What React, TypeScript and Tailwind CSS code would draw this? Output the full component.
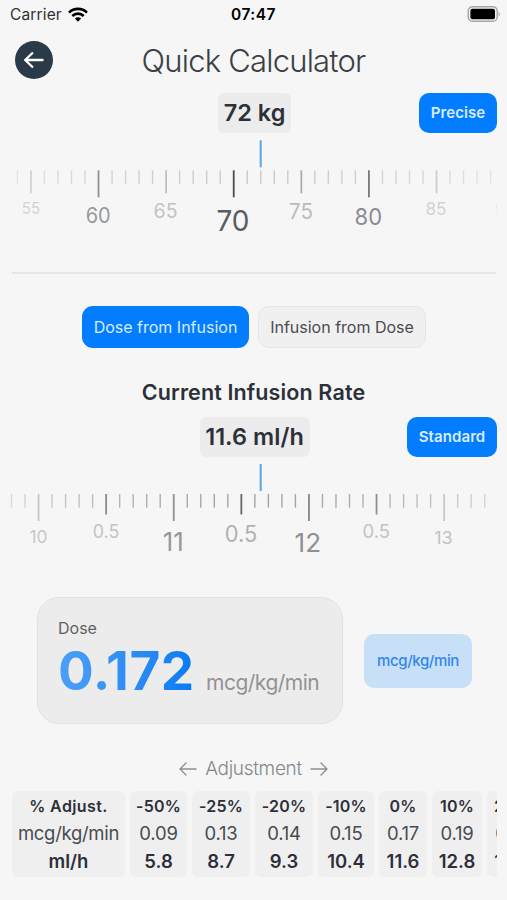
import React from "react";

type Label = { x: number; y: number; text: string; size: number; color: string; width: number };

const weightLabels: Label[] = [
  { x: 31, y: 214.3, text: "55", size: 16, color: "#d2d3d5", width: 18.5 },
  { x: 98.2, y: 223, text: "60", size: 21, color: "#98999c", width: 25 },
  { x: 165.6, y: 218, text: "65", size: 19.5, color: "#c2c3c5", width: 24 },
  { x: 233, y: 230.5, text: "70", size: 29, color: "#595c60", width: 33 },
  { x: 301, y: 219, text: "75", size: 21, color: "#bbbcbf", width: 24 },
  { x: 368.3, y: 224.5, text: "80", size: 23.5, color: "#8b8c90", width: 27.5 },
  { x: 436, y: 215, text: "85", size: 17.5, color: "#d2d3d5", width: 21 },
  { x: 505.2, y: 216, text: "90", size: 17.5, color: "#c8c9cb", width: 19 },
];

const rateLabels: Label[] = [
  { x: 38.5, y: 543, text: "10", size: 17, color: "#c6c7c9", width: 18 },
  { x: 106, y: 537.6, text: "0.5", size: 18, color: "#c2c3c5", width: 26.5 },
  { x: 173.3, y: 550.5, text: "11", size: 25.5, color: "#98999c", width: 21 },
  { x: 241, y: 541.5, text: "0.5", size: 22.5, color: "#b0b1b4", width: 32.5 },
  { x: 307.8, y: 551.5, text: "12", size: 26, color: "#8f9093", width: 26.5 },
  { x: 376.2, y: 538, text: "0.5", size: 19, color: "#c2c3c5", width: 27.5 },
  { x: 443.5, y: 543.5, text: "13", size: 17.5, color: "#c2c3c5", width: 18.5 },
];

const weightMajors: Record<number, [number, string, number]> = {
  1: [23, "#cfd0d1", 1.7],
  6: [27, "#8f9092", 1.8],
  11: [23, "#bcbdbf", 1.7],
  16: [27, "#4b4d51", 1.8],
  21: [23, "#a9aaad", 1.7],
  26: [27, "#77787b", 1.8],
  31: [23, "#cbccce", 1.7],
};
const rateMajors: Record<number, [number, string, number]> = {
  2: [27, "#c2c3c5", 1.6],
  7: [20.5, "#8a8b8e", 1.8],
  12: [27, "#8f9092", 1.8],
  17: [20.5, "#65676b", 1.8],
  22: [27, "#85868a", 1.8],
  27: [20.5, "#8f9092", 1.8],
  32: [27, "#c2c3c5", 1.6],
};

type RulerProps = {
  top: number;
  height: number;
  start: number;
  tickY: number;
  near: number;
  far: number;
  majors: Record<number, [number, string, number]>;
  labels: Label[];
};

function Ruler({ top, height, start, tickY, near, far, majors, labels }: RulerProps) {
  const ticks = Array.from({ length: 36 }, (_, i) => i);
  return (
    <svg
      className="ml-[10px] block w-[487px] shrink-0"
      height={height}
      viewBox={`10 ${top} 487 ${height}`}
      fontFamily="Inter, sans-serif"
    >
      <rect x={259.7} y={tickY - 30} width={2} height={27} fill="#5aa5e4" />
      {ticks.map((i) => {
        const x = start + i * 13.52;
        const major = majors[i];
        const shade = Math.round(near + (Math.abs(x - 254) / 242) ** 2 * (far - near));
        const [h, fill, w] = major ?? [13.7, `rgb(${shade},${shade},${shade + 1})`, 1.4];
        return <rect key={i} x={x - w / 2} y={tickY} width={w} height={h} fill={fill} />;
      })}
      {labels.map((l, i) => (
        <text key={i} x={l.x} y={l.y} fontSize={l.size} fill={l.color} textAnchor="middle" textLength={l.width} lengthAdjust="spacingAndGlyphs">
          {l.text}
        </text>
      ))}
    </svg>
  );
}

const columns = [
  { w: "w-[57px]", pct: "-50%", dose: "0.09", rate: "5.8" },
  { w: "w-[58px]", pct: "-25%", dose: "0.13", rate: "8.7" },
  { w: "w-[58px]", pct: "-20%", dose: "0.14", rate: "9.3" },
  { w: "w-[56px]", pct: "-10%", dose: "0.15", rate: "10.4" },
  { w: "w-[48px]", pct: "0%", dose: "0.17", rate: "11.6" },
  { w: "w-[50px]", pct: "10%", dose: "0.19", rate: "12.8" },
  { w: "w-[51px]", pct: "20%", dose: "0.21", rate: "13.9" },
];

function Arrow({ flip }: { flip?: boolean }) {
  return (
    <svg
      className={flip ? "rotate-180" : ""}
      width="18"
      height="14"
      viewBox="0 0 18 14"
      fill="none"
      stroke="#8d8e91"
      strokeWidth="1.4"
      strokeLinecap="round"
      strokeLinejoin="round"
    >
      <path d="M7 1 1 7l6 6M1 7h16" />
    </svg>
  );
}

export default function App() {
  return (
    <div className="flex h-[900px] w-[507px] flex-col overflow-hidden bg-[#f6f6f7] font-['Inter',sans-serif] whitespace-nowrap text-[#2c3038]">
      <div className="grid h-[30px] shrink-0 grid-cols-3 items-center px-[10px] text-black">
        <div className="flex items-center gap-[6px]">
          <span className="text-[15.5px] tracking-[0.15px] text-[#303032]">Carrier</span>
          <svg className="-mt-[2px]" width="20" height="15" viewBox="0 0 20 15" fill="none" stroke="#000" strokeWidth="2.6">
            <path d="M1 5.6a12.8 12.8 0 0 1 18 0" />
            <path d="M4.3 9a8.1 8.1 0 0 1 11.4 0" />
            <path d="M10 14.7 6.9 11.6a4.4 4.4 0 0 1 6.2 0Z" fill="#000" stroke="none" />
          </svg>
        </div>
        <span className="text-center text-[15.5px] font-semibold tracking-[0.5px]">07:47</span>
        <svg className="-mt-[3px] -mr-[4px] justify-self-end" width="34" height="16" viewBox="0 0 34 16">
          <rect x="1.2" y=".7" width="29" height="14.6" rx="4.2" fill="none" stroke="#a5a5a5" strokeWidth="1.4" />
          <rect x="3.4" y="2.8" width="24.6" height="10.4" rx="2" fill="#000" />
          <path d="M31.6 5.4q2.6 2.6 0 5.2Z" fill="#a5a5a5" />
        </svg>
      </div>

      <header className="grid h-[60px] shrink-0 grid-cols-[38px_1fr_38px] items-center px-[15px]">
        <div className="flex size-[38px] items-center justify-center rounded-full bg-[#2b3a48]">
          <svg width="20" height="16" viewBox="0 0 20 16" fill="none" stroke="#fff" strokeWidth="2.3" strokeLinecap="round" strokeLinejoin="round">
            <path d="M8.2 1.2 1.2 8l7 6.8M1.2 8h17.4" />
          </svg>
        </div>
        <h1 className="pt-[2px] text-center text-[31px] font-light tracking-[-0.8px] text-[#3c3f45]">Quick Calculator</h1>
      </header>

      <div className="mt-[3px] grid h-10 shrink-0 grid-cols-[1fr_auto_1fr] items-center pr-[10px] pl-3">
        <span />
        <div className="flex h-10 w-[73px] items-center justify-center rounded-md bg-[#ececed] text-[23.5px] font-semibold">72 kg</div>
        <div className="flex h-[40px] w-[78px] items-center justify-center justify-self-end rounded-[10px] bg-[#027dff] text-[15px] font-semibold tracking-[0.1px] text-[#d9ebff]">Precise</div>
      </div>

      <Ruler top={133} height={139} start={17.4} tickY={170.3} near={203} far={230} majors={weightMajors} labels={weightLabels} />

      <div className="mx-3 h-[2px] w-[484px] shrink-0 bg-[#e6e6e7]" />

      <div className="mt-8 ml-[82px] flex shrink-0 gap-[9px]">
        <div className="flex h-[42px] w-[167px] items-center justify-center rounded-[11px] bg-[#027dff] text-[16px] text-[#d9ebff]">Dose from Infusion</div>
        <div className="flex h-[42px] w-[168px] items-center justify-center rounded-[11px] border border-[#e6e6e8] bg-[#f1f0f1] text-[16px] text-[#4a4b50]">Infusion from Dose</div>
      </div>

      <h2 className="mt-[29px] h-[30px] shrink-0 text-center text-[21.5px] leading-[30px] font-semibold tracking-[0.13px]">Current Infusion Rate</h2>

      <div className="mt-[10px] grid h-10 shrink-0 grid-cols-[1fr_auto_1fr] items-center pr-[10px] pl-3">
        <span />
        <div className="flex h-10 w-[110px] items-center justify-center rounded-md bg-[#ececed] text-[23.5px] font-semibold tracking-[0.05px]">11.6 ml/h</div>
        <div className="flex h-10 w-[90px] items-center justify-center justify-self-end rounded-[10px] bg-[#027dff] text-[15px] font-semibold tracking-[0.1px] text-[#d9ebff]">Standard</div>
      </div>

      <Ruler top={457} height={140} start={11.5} tickY={494} near={165} far={218} majors={rateMajors} labels={rateLabels} />

      <div className="ml-[37px] flex shrink-0 items-center gap-[21px]">
        <div className="flex h-[127px] w-[306px] flex-col rounded-[22px] border border-[#e3e2e3] bg-[#edecec] pt-[19px] pl-[20px]">
          <span className="text-[16px] leading-[22px] text-[#606166]">Dose</span>
          <div className="mt-[2px] flex items-baseline">
            <span className="w-[148px] bg-linear-to-r from-[#4ba0f7] to-[#087bf3] to-90% bg-clip-text text-[53px] leading-[60px] font-bold tracking-[0.5px] text-transparent">0.172</span>
            <span className="text-[21px] tracking-[-0.5px] text-[#929295]">mcg/kg/min</span>
          </div>
        </div>
        <div className="flex h-[54px] w-[108px] items-center justify-center rounded-[10px] bg-[#c7e0f8] pt-[2px] text-[15px] font-medium tracking-[-0.4px] text-[#3187ee]">mcg/kg/min</div>
      </div>

      <div className="mt-[31px] flex h-[28px] shrink-0 items-center justify-center gap-2 text-[19px] font-light tracking-[-0.3px] text-[#85868a]">
        <Arrow />
        <span className="pt-px">Adjustment</span>
        <Arrow flip />
      </div>

      <div className="mt-2 ml-3 flex h-[86px] w-[485px] shrink-0 gap-[5px] overflow-hidden text-center">
        <div className="flex w-[113px] shrink-0 flex-col rounded-md bg-[#f0eff0] pt-px">
          <span className="h-[27px] text-[16px] leading-[28px] font-semibold tracking-[0.4px]">% Adjust.</span>
          <span className="h-[28px] text-[18.5px] leading-[28px] tracking-[-0.3px] text-[#494b50]">mcg/kg/min</span>
          <span className="h-[28px] text-[18.5px] leading-[28px] font-semibold">ml/h</span>
        </div>
        {columns.map((c) => (
          <div key={c.pct} className={`flex shrink-0 flex-col rounded-md bg-[#f0eff0] pt-px ${c.w}`}>
            <span className="h-[27px] text-[16px] leading-[28px] font-semibold tracking-[0.2px]">{c.pct}</span>
            <span className="h-[28px] text-[18.5px] leading-[28px] tracking-[-0.2px] text-[#494b50]">{c.dose}</span>
            <span className="h-[28px] text-[18.5px] leading-[28px] font-semibold">{c.rate}</span>
          </div>
        ))}
      </div>
    </div>
  );
}
